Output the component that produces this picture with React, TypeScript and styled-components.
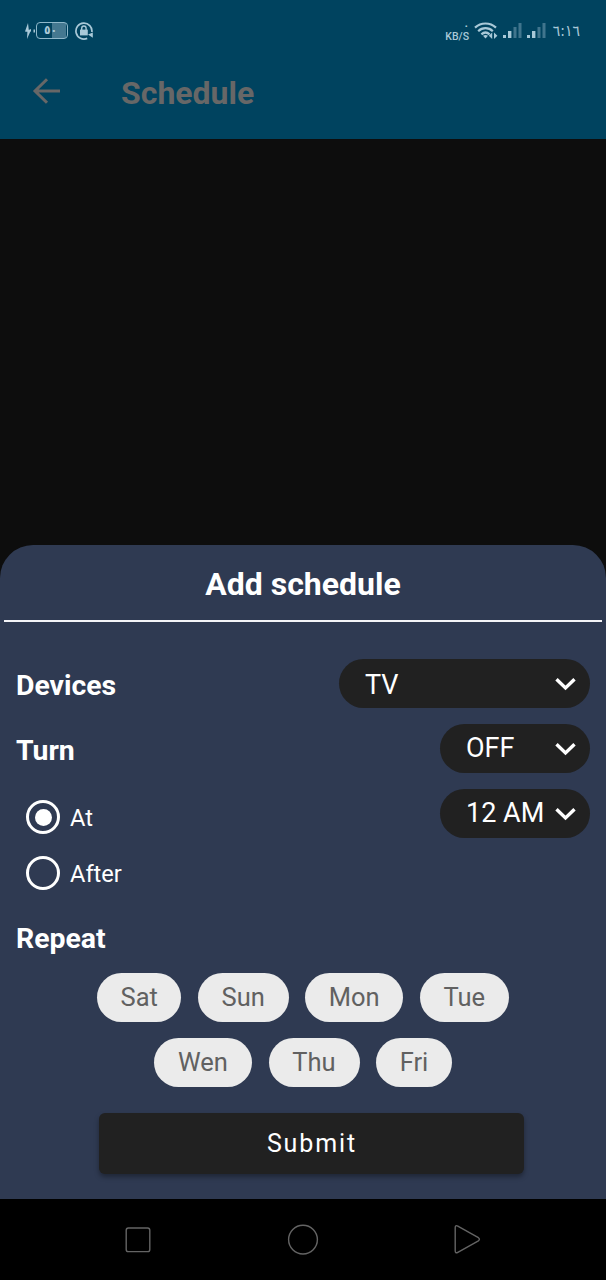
import React, { useState } from "react";
import styled, { createGlobalStyle } from "styled-components";

const GlobalStyle = createGlobalStyle`
  * { box-sizing: border-box; }
  body { margin: 0; background: #0d0d0d; font-family: Roboto, "Liberation Sans", sans-serif; }
  button { font-family: inherit; border: 0; padding: 0; margin: 0; }
`;

const Screen = styled.div`
  width: 606px;
  height: 1280px;
  display: flex;
  flex-direction: column;
  background: #0d0d0d;
  overflow: hidden;
`;

const Header = styled.header`
  height: 139px;
  flex: none;
  background: #00435f;
`;

const StatusBar = styled.div`
  height: 60px;
  display: flex;
  align-items: center;
  justify-content: space-between;
  padding: 1px 26px 0 24px;
  color: #a9c9d8;
`;

const StatusGroup = styled.div<{ $gap: number }>`
  display: flex;
  align-items: center;
  gap: ${(p) => p.$gap}px;
`;

const Battery = styled.div`
  display: flex;
  align-items: center;
  gap: 1px;
`;

const BatteryBody = styled.div`
  width: 32px;
  height: 17px;
  border: 1px solid #8fb8ca;
  border-radius: 4px;
  padding-right: 3px;
  display: flex;
  align-items: center;
  justify-content: center;
  background: linear-gradient(to right, transparent 15px, #447890 15px, #447890 29px, transparent 29px);
  font: bold 12px/15px "DejaVu Sans Condensed", "DejaVu Sans", sans-serif;
  font-stretch: condensed;
`;

const Speed = styled.div`
  display: flex;
  flex-direction: column;
  align-items: flex-end;
  height: 22px;
  margin-top: 5px;
  font: 500 10.5px/12px Roboto, sans-serif;
`;

const SpeedValue = styled.span`
  font: bold 9px/9px "DejaVu Sans", sans-serif;
`;

const Clock = styled.span`
  width: 27px;
  display: flex;
  justify-content: flex-end;
  white-space: nowrap;
  font: 15.5px/20px "DejaVu Sans Condensed", "DejaVu Sans", sans-serif;
  font-stretch: condensed;
  letter-spacing: -1px;
  margin-left: 2px;
`;

const AppBar = styled.div`
  display: flex;
  align-items: center;
  height: 62px;
  padding-left: 32px;
  gap: 60px;
  color: #676767;
`;

const PageTitle = styled.h1`
  margin: 3px 0 0;
  font-size: 32px;
  line-height: 38px;
  font-weight: 700;
`;

const Backdrop = styled.main`
  flex: 1;
  display: flex;
  flex-direction: column;
  justify-content: flex-end;
`;

const Sheet = styled.section`
  height: 654px;
  background: #2f3a52;
  border-radius: 33px 33px 0 0;
  color: #fff;
  display: flex;
  flex-direction: column;
`;

const SheetTitle = styled.h2`
  margin: 0 4px;
  height: 77px;
  padding-top: 1px;
  border-bottom: 2px solid #f4f4f8;
  text-align: center;
  font-size: 32px;
  line-height: 76px;
  font-weight: 700;
`;

const Fields = styled.div`
  display: flex;
  justify-content: space-between;
  height: 279px;
  padding: 37px 16px 0;
`;

const Column = styled.div<{ $end?: boolean }>`
  display: flex;
  flex-direction: column;
  align-items: ${(p) => (p.$end ? "flex-end" : "flex-start")};
  gap: ${(p) => (p.$end ? 16 : 0)}px;
`;

const Label = styled.div`
  height: 65px;
  font-size: 28.4px;
  line-height: 53px;
  font-weight: 700;
`;

const Select = styled.button<{ $width: number; $drop?: number }>`
  width: ${(p) => p.$width}px;
  height: 49px;
  border-radius: 25px;
  background: #212121;
  color: #fff;
  display: flex;
  align-items: center;
  justify-content: space-between;
  padding: 0 14px 0 26px;
  font-size: 27px;
  line-height: 45px;

  span {
    padding-top: ${(p) => p.$drop ?? 0}px;
  }
`;

const RadioRow = styled.button`
  height: 56px;
  padding-left: 10px;
  display: flex;
  align-items: center;
  gap: 10px;
  background: none;
  color: #fff;
  font-size: 23.6px;
`;

const RadioName = styled.span`
  padding-top: 2px;
`;

const RadioRing = styled.span`
  width: 34px;
  height: 34px;
  border: 3px solid #fff;
  border-radius: 50%;
  display: flex;
  align-items: center;
  justify-content: center;
`;

const RadioDot = styled.span`
  width: 17px;
  height: 17px;
  border-radius: 50%;
  background: #fff;
`;

const RepeatLabel = styled.div`
  padding: 11px 0 0 16px;
  height: 71.5px;
  font-size: 28.4px;
  line-height: 53px;
  font-weight: 700;
`;

const Days = styled.div`
  display: flex;
  flex-direction: column;
  gap: 16px;
`;

const DayRow = styled.div`
  display: flex;
  justify-content: center;
  gap: 16.5px;
`;

const Chip = styled.button<{ $width: number }>`
  width: ${(p) => p.$width}px;
  height: 49px;
  border-radius: 25px;
  background: #ebebeb;
  color: #616161;
  font-size: 25.5px;
  line-height: 48px;
  text-align: center;
`;

const Submit = styled.button`
  width: 425px;
  height: 61px;
  margin: 26px 0 0 99px;
  border-radius: 6px;
  background: #212121;
  color: #fff;
  font-size: 25px;
  letter-spacing: 1.9px;
  padding-left: 1px;
  line-height: 61px;
  box-shadow: 0 3px 5px rgba(0, 0, 0, 0.35);
`;

const NavBar = styled.nav`
  height: 81px;
  flex: none;
  background: #000;
  display: flex;
  align-items: center;
  justify-content: space-between;
  padding: 0 124px;
`;

const Chevron = () => (
  <svg width="21" height="14" viewBox="0 0 21 14" fill="none" stroke="#fff" strokeWidth="3.4">
    <path d="M1.5 2.3 10.5 11 19.5 2.3" />
  </svg>
);

const Bolt = () => (
  <svg width="11" height="16" viewBox="0 0 11 16" fill="currentColor">
    <path d="M4 0 1 8.5h2.4L3 16l4-9H4.8zM9.5 6.5h1.5v3H9.5z" />
    <path d="M1 8.5 7 6v2.5z" />
  </svg>
);

const RotationLock = () => (
  <svg width="18" height="18" viewBox="0 0 18 18" fill="none" stroke="currentColor" strokeWidth="1.7">
    <path d="M12.2 16.4A8 8 0 1 1 16.9 10" />
    <path d="M17.8 10.4v5.4L13 12.6z" fill="currentColor" stroke="none" />
    <rect x="5" y="7.6" width="7.8" height="5.8" fill="currentColor" stroke="none" />
    <path d="M6.7 8V6.2a2.2 2.2 0 0 1 4.4 0V8" strokeWidth="1.4" />
  </svg>
);

const Wifi = () => (
  <svg width="24" height="18" viewBox="0 0 24 18" fill="none" stroke="currentColor" strokeWidth="2.2">
    <path d="M1 5.6C7 .1 16 .1 22 5.6" />
    <path d="M4.2 9.2C8.4 5.2 14.6 5.2 18.8 9.2" />
    <path d="M7.4 12.4c2.8-2.6 5.4-2.6 8.2 0" />
    <path d="M9 13.8c1.6-1.2 3.4-1.2 5 0L11.5 16.4z" fill="currentColor" stroke="none" />
    <path d="M18.2 10.5v6.5l-3.4-3.2zM20 17v-6.5l3.4 3.2z" fill="currentColor" stroke="none" />
  </svg>
);

const Signal = () => (
  <svg width="19" height="16" viewBox="0 0 19 16" fill="currentColor">
    <rect x="0" y="12" width="3" height="3" />
    <rect x="5" y="8" width="3.4" height="7" />
    <rect x="10.5" y="4" width="3" height="11" opacity=".38" />
    <rect x="15.5" y="0" width="3" height="15" opacity=".38" />
  </svg>
);

const BackArrow = () => (
  <svg width="29" height="28" viewBox="0 0 29 28" fill="none" stroke="currentColor" strokeWidth="3">
    <path d="M28 14H3.5M15 2.2 3 14l12 11.8" />
  </svg>
);

const RecentsIcon = () => (
  <svg width="28" height="32" viewBox="0 0 28 32" fill="none" stroke="#646464" strokeWidth="1.4">
    <rect x="2.2" y="4" width="23.6" height="23.6" rx="2.2" />
  </svg>
);

const HomeIcon = () => (
  <svg width="32" height="32" viewBox="0 0 32 32" fill="none" stroke="#646464" strokeWidth="1.4">
    <circle cx="16" cy="15.6" r="14.4" />
  </svg>
);

const BackIcon = () => (
  <svg width="28" height="32" viewBox="0 0 28 32" fill="none" stroke="#646464" strokeWidth="1.4" strokeLinejoin="round">
    <path d="M1.2 3.7v23q0 3 2.6 1.6l20.6-11.4q2-1.6 0-3.2L3.8 2.1q-2.6-1.4-2.6 1.6z" />
  </svg>
);

const dayRows = [
  [
    { name: "Sat", width: 84 },
    { name: "Sun", width: 91 },
    { name: "Mon", width: 98 },
    { name: "Tue", width: 89 },
  ],
  [
    { name: "Wen", width: 98 },
    { name: "Thu", width: 91 },
    { name: "Fri", width: 76 },
  ],
];

export default function App() {
  const [mode, setMode] = useState("At");
  return (
    <Screen>
      <GlobalStyle />
      <Header>
        <StatusBar>
          <StatusGroup $gap={7}>
            <Battery>
              <Bolt />
              <BatteryBody>٥٠</BatteryBody>
            </Battery>
            <RotationLock />
          </StatusGroup>
          <StatusGroup $gap={5}>
            <Speed>
              <SpeedValue>٠</SpeedValue>
              <span>KB/S</span>
            </Speed>
            <Wifi />
            <Signal />
            <Signal />
            <Clock>٦:١٦</Clock>
          </StatusGroup>
        </StatusBar>
        <AppBar>
          <BackArrow />
          <PageTitle>Schedule</PageTitle>
        </AppBar>
      </Header>
      <Backdrop>
        <Sheet>
          <SheetTitle>Add schedule</SheetTitle>
          <Fields>
            <Column>
              <Label>Devices</Label>
              <Label>Turn</Label>
              {["At", "After"].map((name) => (
                <RadioRow key={name} onClick={() => setMode(name)}>
                  <RadioRing>{mode === name && <RadioDot />}</RadioRing>
                  <RadioName>{name}</RadioName>
                </RadioRow>
              ))}
            </Column>
            <Column $end>
              <Select $width={251} $drop={3}><span>TV</span><Chevron /></Select>
              <Select $width={150}><span>OFF</span><Chevron /></Select>
              <Select $width={150}><span>12 AM</span><Chevron /></Select>
            </Column>
          </Fields>
          <RepeatLabel>Repeat</RepeatLabel>
          <Days>
            {dayRows.map((row, i) => (
              <DayRow key={i}>
                {row.map((day) => (
                  <Chip key={day.name} $width={day.width}>{day.name}</Chip>
                ))}
              </DayRow>
            ))}
          </Days>
          <Submit>Submit</Submit>
        </Sheet>
      </Backdrop>
      <NavBar>
        <RecentsIcon />
        <HomeIcon />
        <BackIcon />
      </NavBar>
    </Screen>
  );
}
